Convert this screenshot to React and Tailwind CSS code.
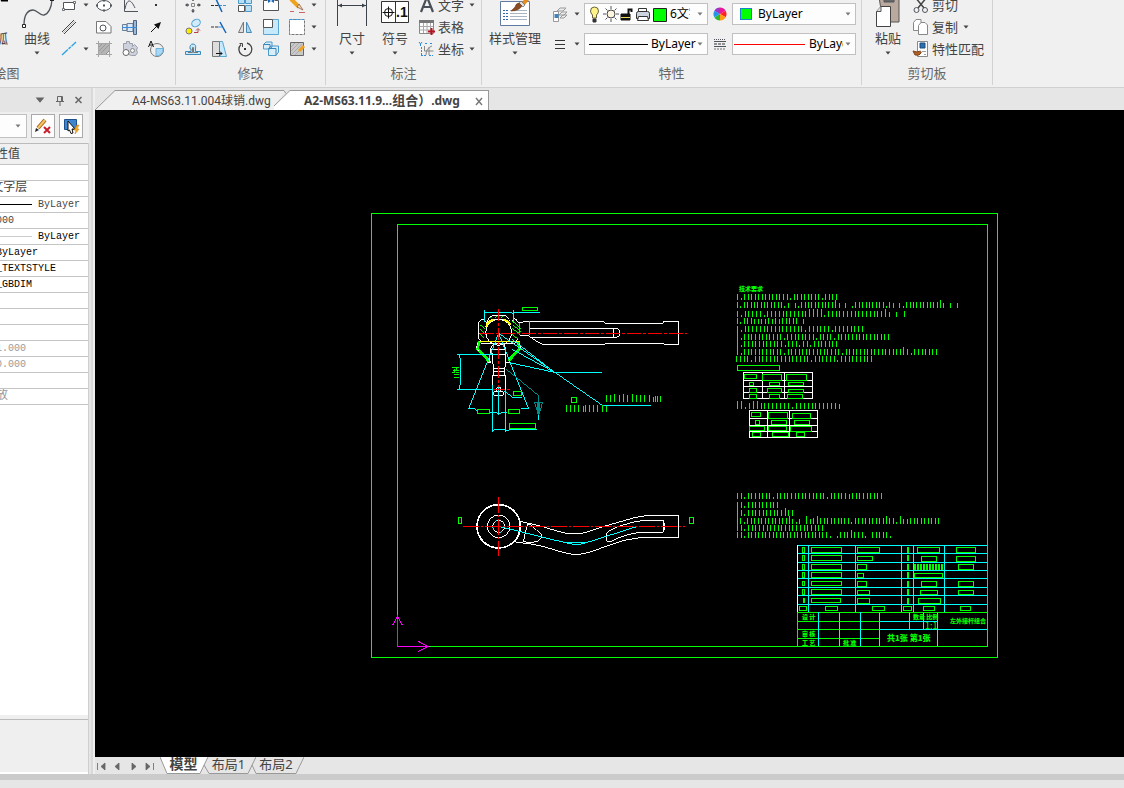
const cjk = "font-['Noto_Sans','Noto_Sans_CJK_SC',sans-serif]";

function Icon({ children, className = "h-[18px] w-[18px]", box = "0 0 18 18" }) {
  return (
    <svg className={`${className} shrink-0`} viewBox={box} fill="none" stroke="#50555c" aria-hidden="true">
      {children}
    </svg>
  );
}

function Caret({ className = "h-2 w-2" }) {
  return (
    <svg className={`shrink-0 ${className}`} viewBox="0 0 8 8" fill="#444" aria-hidden="true">
      <path d="M1.500 2.500h5L4 5.500z" />
    </svg>
  );
}

const drawTools = [
  ["矩形", true, <Icon key="i"><path d="M3.500 6.500h11v7h-11z" fill="#fff" /><path d="M13.500 5.500h2v2h-2zM2.500 12.500h2v2h-2z" fill="#fff" strokeWidth=".8" /></Icon>],
  ["椭圆", false, <Icon key="i"><ellipse cx="9" cy="9.500" rx="7" ry="5" fill="#fff" /><path d="M8 4.500h2M8 14.500h2M1 9.500h2M15 9.500h2M8 9.500h2" strokeWidth="2" /></Icon>],
  ["抛物线", false, <Icon key="i"><path d="M3.500 1v14.500H17" /><path d="M4 13C6 2 10 3 14 12" /></Icon>],
  ["点", false, <Icon key="i"><path d="M8 8h2v2H8z" fill="#333" stroke="none" /></Icon>],
  ["双线", false, <Icon key="i"><path d="M2 14 14 2M4 16 16 4" stroke="#444" /><path d="M3 15 15 3" stroke="#bbb" /></Icon>],
  ["多边形", false, <Icon key="i"><path d="M1.500 3.500H11l5 5v6.500H1.500z" fill="#fff" stroke="#777" /><circle cx="8" cy="10" r="3" /></Icon>],
  ["轴", false, <Icon key="i"><path d="M1.500 6.500H6v6H1.500zM6 5.500h6v8H6z" fill="#d5e9fa" stroke="#6b7f95" /><path d="M12.500 2.500h3v14h-3z" fill="#9fb8d6" stroke="#4d6484" /><path d="M1 9.500h15" stroke="#3b8de0" /></Icon>],
  ["箭头", false, <Icon key="i"><path d="m4 14 6-6" stroke="#111" /><path d="m14 4-2.500 7L7 6.500z" fill="#111" stroke="none" /></Icon>],
  ["构造线", true, <Icon key="i"><path d="M2 15 16 2" stroke="#2ea3e6" strokeWidth="1.400" strokeDasharray="8 1 3 1" /></Icon>],
  ["填充", false, <Icon key="i"><path d="M3.500 3.500h11v7l-4 4h-7z" fill="#b5b5b5" stroke="#8c8c8c" /><path d="M1 3.500h16M1 14.500h16M3.500 1v16M14.500 1v16" stroke="#a5a5a5" /><path d="m4 7 3-3M4 11l7-7M6 13l8-8" stroke="#999" /></Icon>],
  ["零件", false, <Icon key="i"><path d="M2.500 3.500h3V1.500h3v2h3v3l2-2 3 3-1 2.500 1 2.500-2 3h-4l-3-1-5-5z" fill="#cdd2dc" stroke="#9a9fab" /><circle cx="5" cy="12.500" r="3" fill="#fff" stroke="#666" /><circle cx="11.500" cy="10.500" r="2" fill="#f4f4f4" stroke="#888" /></Icon>],
  ["文字环绕", false, <Icon key="i"><circle cx="10" cy="10" r="6.500" stroke="#777" /><path d="M9 8.500h7a6 6 0 0 1-7 7z" fill="#a8d8f5" stroke="#6db5df" /><path d="m1.500 7 2.500-6 2.500 6M2.500 5h3" stroke="#111" /></Icon>],
];

const editTools = [
  ["移动", <Icon key="i"><path d="M9 2v3M9 13v3M2 9h3M13 9h3" strokeWidth="1.500" /><path d="m9 1-2 2.500h4zM9 17l-2-2.500h4zM1 9l2.500-2v4zM17 9l-2.500-2v4z" fill="#50555c" stroke="none" /><path d="M7.500 7.500h3v3h-3z" stroke="#888" /></Icon>],
  ["修剪", <Icon key="i"><path d="M1 9.500h8" stroke="#333" strokeDasharray="3 1" /><path d="M9 9.500h8" stroke="#3b97dc" strokeDasharray="3 1" /><path d="m6 3 6 13" stroke="#1665bb" strokeWidth="1.500" /></Icon>],
  ["阵列", <Icon key="i"><path d="M2.500 1.500h6v6h-6zM9.500 1.500h6v6h-6zM9.500 9.500h6v6h-6z" fill="#b9dff5" stroke="#4a99c9" /><path d="M2.500 9.500h6v6h-6z" fill="#fff" stroke="#555" /></Icon>],
  ["打断", <Icon key="i"><path d="M1.500 4.500h4M12.500 4.500h4M1.500 4.500v10h15v-10" fill="#fff" /><path d="M6 3v4l3-2zM12 3v4L9 5z" fill="#1665bb" stroke="none" /></Icon>],
  ["删除", <Icon key="i"><path d="m3 3 8 8" stroke="#eea321" strokeWidth="4" /><path d="m11 8 4 6-6-3z" fill="#f9d6a8" stroke="#80523a" strokeWidth=".7" /><path d="M2 15.500h4M11 16.500h6" stroke="#c66" /></Icon>],
  ["复制", <Icon key="i"><ellipse cx="12" cy="5" rx="4.500" ry="3.500" fill="#d2ebfa" stroke="#4d9fd0" transform="rotate(-30 12 5)" /><circle cx="5" cy="13" r="3" fill="#ffea00" stroke="#777" /><path d="M10 14.500h4v-3m-2 1 2-2 2 2" stroke="#b54040" /></Icon>],
  ["延伸", <Icon key="i"><path d="M1 9h7" stroke="#333" strokeDasharray="3 1" /><path d="M8 9h4" stroke="#3b97dc" /><path d="m10 4 6 11" stroke="#1665bb" strokeWidth="1.500" /></Icon>],
  ["镜像", <Icon key="i"><path d="M7.500 4v10.500h-5z" fill="#ddd" stroke="#777" /><path d="M10.500 4v10.500h5z" fill="#a9d5ef" stroke="#4a8ab5" /></Icon>],
  ["缩放", <Icon key="i"><path d="M1.500 1.500h15v15h-15z" fill="#c6e9fb" stroke="#5aa7d0" /><path d="M1.500 1.500h9v8h-9z" fill="#fff" stroke="#555" /></Icon>],
  ["选择", <Icon key="i"><path d="M1.500 1.500h15v15h-15z" fill="#fff" stroke="#777" strokeDasharray="3 1" /><path d="M1.500 16.500v-15h15" stroke="#3b97dc" strokeDasharray="2 1" /></Icon>],
  ["偏移", <Icon key="i"><path d="M1.500 14.500h15v-3h-5V9q1-5-2.500-5T6 9h1v2.500H1.500z" fill="#c6e9fb" stroke="#3d89b8" /><path d="M4 12.500h4.500V7.500q.500-1 1 0v5H14" stroke="#777" /></Icon>],
  ["拉伸", <Icon key="i"><path d="M9.500 1.500h3l4 15h-7z" fill="#c6e9fb" stroke="#5aa7d0" /><path d="M2.500 1.500h7v15h-7z" fill="#ddd" stroke="#777" /><path d="M6 13.500h6m-2-2 2 2-2 2" stroke="#111" /></Icon>],
  ["旋转", <Icon key="i"><path d="M5 4.500A6.500 6.500 0 1 0 11 3" stroke="#444" strokeWidth="1.300" /><path d="M3.500 3.500H6.500v3.500" stroke="#444" /><path d="M8 9h2" stroke="#333" strokeWidth="2" /></Icon>],
  ["三维阵列", <Icon key="i"><path d="M1.500 4.500 4 2h6v5l-2 2H1.500zM6.500 8.500 9 6h7.500v6L14 15.500H6.500z" fill="#d8effb" stroke="#4a99c9" /><path d="M1.500 4.500H8V9M6.500 8.500H14v7" stroke="#3685b5" /></Icon>],
  ["编辑填充", <Icon key="i"><path d="M2.500 2.500h13v13h-13z" fill="#c9c9c9" stroke="#666" /><path d="m3 7 4-4M3 11l8-8M3 15 14 4M7 15l4-4" stroke="#aaa" /><path d="m11 11 5-5" stroke="#f0a020" strokeWidth="3" /></Icon>],
];

function Group({ label, className, children }) {
  return (
    <section className={`flex h-[85px] shrink-0 flex-col border-r border-[#d2d2d2] ${className}`}>
      <div className="flex h-[63px] items-end overflow-hidden">{children}</div>
      <h2 className="flex h-[22px] items-center justify-center text-[13px] text-[#666]">{label}</h2>
    </section>
  );
}

function BigButton({ label, className, children }) {
  return (
    <button className={`flex shrink-0 flex-col items-center pb-1.5 ${className}`}>
      <span className="flex h-8 items-end">{children}</span>
      <span className="h-5 text-[13px] leading-[18px] whitespace-nowrap">{label}</span>
      <Caret />
    </button>
  );
}

function RowButton({ label, caret, children }) {
  return (
    <button className="flex h-[22px] items-center gap-[2px] text-[13px] leading-5 whitespace-nowrap">
      {children}
      {label}
      {caret && <Caret className="ml-0.5 h-2 w-2" />}
    </button>
  );
}

function Combo({ name, value, lead, className = "" }) {
  return (
    <div className="flex h-[22px] w-[124px] items-center border border-[#c0c0c0] bg-[#fdfdfd] pr-[3px] pl-1">
      {lead}
      <select aria-label={name} className={`appearance-none overflow-hidden bg-transparent text-xs text-black outline-none ${className}`}>
        <option>{value}</option>
      </select>
      <Caret className="ml-auto h-2 w-2 opacity-70" />
    </div>
  );
}

function Ribbon() {
  return (
    <header className="flex h-[88px] shrink-0 overflow-hidden border-b border-[#d0d0d0] bg-[#f0f0f0]">
      <div className="flex w-[176px] shrink-0 justify-end overflow-hidden">
        <Group label="绘图" className="w-[338px] [&>div]:justify-end [&>div]:pr-1.5">
          <BigButton label="圆弧" className="mr-2">
            <Icon className="h-8 w-8" box="0 0 32 32"><path d="M2 28Q6 6 26 1" /><path d="M22 3h7" stroke="#000" strokeWidth="3" /></Icon>
          </BigButton>
          <BigButton label="曲线" className="mr-[5px] w-9">
            <Icon className="h-8 w-9" box="0 0 36 32">
              <path d="M5 28C5 16 10 13 14 13s7 6 11 5 8-7 8-17" strokeWidth="1.300" />
              <path d="M3.500 27.500h3v3h-3z" fill="#fff" stroke="#222" /><path d="M31 0h4v4h-4z" fill="#222" stroke="none" />
            </Icon>
          </BigButton>
          <div className="grid grid-cols-[31px_26px_26px_26px] pb-[3px]">
            {drawTools.map(([name, caret, icon], i) => (
              <button key={name} aria-label={name} className={`flex h-[22px] items-center ${i % 4 ? "justify-center" : ""}`}>
                {icon}
                {caret && <Caret className="ml-1 h-2 w-2" />}
              </button>
            ))}
          </div>
        </Group>
      </div>

      <Group label="修改" className="w-[150px] [&>div]:pl-1">
        <div className="grid grid-cols-[26px_26px_26px_26px_34px] pb-[3px]">
          {editTools.map(([name, icon], i) => (
            <button key={name} aria-label={name} className="flex h-[22px] items-center gap-1 pl-1">
              {icon}
              {i % 5 === 4 && <Caret />}
            </button>
          ))}
        </div>
      </Group>

      <Group label="标注" className="w-[156px] [&>div]:pl-1">
        <BigButton label="尺寸" className="w-11">
          <Icon className="h-8 w-8" box="0 0 32 32">
            <path d="M1.500 0v29M30.500 0v29" stroke="#3c434b" /><path d="M2 8.500h28" stroke="#3c434b" />
            <path d="m2 8.500 4-2v4zM30 8.500l-4-2v4z" fill="#3c434b" stroke="none" />
          </Icon>
        </BigButton>
        <BigButton label="符号" className="mr-0.5 w-[42px]">
          <Icon className="h-8 w-7" box="0 0 28 32">
            <path d="M.500 4.500h27v21H.500zM14.500 4v22" fill="#fff" stroke="#333" />
            <circle cx="7.500" cy="15.500" r="4" stroke="#111" /><path d="M1.500 15.500h12M7.500 9.500v12" stroke="#111" />
            <text x="15" y="20" fill="#111" stroke="none" fontSize="14" fontWeight="700" fontFamily="Liberation Sans, sans-serif">.1</text>
          </Icon>
        </BigButton>
        <div className="pb-[3px]">
          <RowButton label="文字" caret><Icon><path d="m3 16 6-15 6 15M5.500 11h7" stroke="#4a4f57" strokeWidth="2.200" /></Icon></RowButton>
          <RowButton label="表格">
            <Icon><path d="M1.500 2.500h14v13h-14z" fill="#fff" stroke="#888" /><path d="M1 3.500h15" stroke="#777" strokeWidth="3" /><path d="M2 8.500h13M2 12h13M5.500 5v10M9 5v10M12.500 5v10" stroke="#aaa" /><path d="M13.500 10v7M10 13.500h7" stroke="#b3141f" strokeWidth="2" /></Icon>
          </RowButton>
          <RowButton label="坐标" caret>
            <Icon><path d="M3.500 7v8M3 15.500h5M11 15.500h4M7 3.500h3M12 3.500h3" stroke="#2b8be0" strokeDasharray="2 1" /><path d="M6.500 6v5h9M8 15Q8 8 14 6M11 7v8" stroke="#888" /><path d="m1 2 1.500 2L4 2M2.500 4v2" stroke="#2b8be0" /></Icon>
          </RowButton>
        </div>
      </Group>

      <Group label="特性" className="w-[380px] [&>div]:pl-[3px]">
        <BigButton label="样式管理" className="mr-1.5 w-[60px]">
          <Icon className="h-8 w-8" box="0 0 32 32">
            <path d="M1.500 4.500h29v24h-29z" fill="#fff" stroke="#5f7ba0" />
            <path d="M4 13.500h5M4 16.500h5M4 19.500h5M4 22.500h5" stroke="#3668a8" strokeDasharray="2 1" />
            <path d="M11 13.500h17M11 16.500h17M11 19.500h17M11 22.500h17" stroke="#a9b4c2" />
            <path d="M30 0 24 7" stroke="#e58d1c" strokeWidth="4" /><path d="m22 4 4 4-2 2-4-4z" fill="#ddd" stroke="#555" strokeWidth=".6" />
            <path d="M20 6q-3 0-4 4l-4 4q8 0 11-5z" fill="#8a4b20" stroke="#5d3214" strokeWidth=".5" />
          </Icon>
        </BigButton>
        <div className="flex flex-col gap-2 pb-2">
          <div className="flex items-center">
            <button aria-label="图层" className="mr-0.5 flex w-[31px] items-center gap-1">
              <Icon><path d="m6 6 3-3h6l-3 3zM8 10l3-3h5l-3 3zM9 13l3-3h4l-3 3z" fill="#eee" stroke="#999" /><path d="M2.500 6.500h5v10h-5z" fill="#fff" stroke="#999" /><path d="M3.500 9h4v4h-4z" fill="#4082bb" stroke="none" /></Icon>
              <Caret />
            </button>
            <Combo
              name="图层"
              value="6文字层"
              className="w-5"
              lead={
                <Icon className="mr-[3px] h-5 w-[78px]" box="0 0 78 20">
                  <path d="M1.500 7a4 4 0 1 1 8 0q0 2-2 4v3h-4v-3q-2-2-2-4z" fill="#fff38a" stroke="#66603f" /><path d="M4 15h3v3H4z" fill="#333" stroke="#333" />
                  <circle cx="22" cy="10" r="4" fill="#fff6df" stroke="#444" /><path d="M22 2v3M22 15v3M14 10h3M27 10h3M16.500 4.500l2 2M25.500 13.500l2 2M27.500 4.500l-2 2M18.500 13.500l-2 2" />
                  <path d="M32 10h9v6h-9z" fill="#111" stroke="#111" /><path d="M32 13.500h9" stroke="#eed957" /><path d="M39.500 10V5.500h3V8" stroke="#111" strokeWidth="2" />
                  <path d="M49.500 8V4.500h8V8" fill="#fff" stroke="#333" /><path d="M47.500 9.500q0-2 2-2h9q2 0 2 2v5h-13z" fill="#ccd4e0" stroke="#333" /><path d="M49.500 12.500h9l1 4h-11z" fill="#fff" stroke="#333" />
                  <path d="M64.500 4.500h13v13h-13z" fill="#0f0" stroke="#222" />
                </Icon>
              }
            />
            <Icon className="mx-[3px] h-[18px] w-[18px]">
              <g stroke="none">
                <path d="M9 9V2.500A6.500 6.500 0 0 1 14.600 5.700z" fill="#e9189b" /><path d="M9 9l5.600-3.300a6.500 6.500 0 0 1 0 6.600z" fill="#f22" />
                <path d="M9 9l5.600 3.300A6.500 6.500 0 0 1 9 15.500z" fill="#ff9c12" /><path d="M9 9v6.500a6.500 6.500 0 0 1-5.600-3.200z" fill="#2fb52f" />
                <path d="M9 9l-5.600 3.300a6.500 6.500 0 0 1 0-6.600z" fill="#2693e8" /><path d="M9 9 3.400 5.700A6.500 6.500 0 0 1 9 2.500z" fill="#9a35c4" />
              </g>
            </Icon>
            <Combo name="颜色" value="ByLayer" className="w-16" lead={<span className="mr-1.5 ml-[3px] h-3 w-3 shrink-0 border border-[#1780d0] bg-[#00ff00]" />} />
          </div>
          <div className="flex items-center">
            <button aria-label="线型" className="mr-0.5 flex w-[31px] items-center gap-1">
              <Icon><path d="M4 5.500h10M4 9.500h10M4 13.500h10" stroke="#333" /></Icon>
              <Caret />
            </button>
            <Combo name="线型" value="ByLayer" className="w-[45px]" lead={<span className="mr-[3px] w-[59px] shrink-0 border-t border-black" />} />
            <Icon className="mx-[3px] h-[18px] w-[18px]"><path d="M3 4.500h12" strokeDasharray="1 1" /><path d="M3 6.500h12M3 11.500h12" /><path d="M3 9h12" stroke="#333" strokeDasharray="3 1" /><path d="M3 14h12" stroke="#777" strokeDasharray="2 1" /></Icon>
            <Combo name="线宽" value="ByLayer" className="w-[34px]" lead={<span className="mr-1 -ml-[3px] w-[71px] shrink-0 border-t border-[#ff0000]" />} />
          </div>
        </div>
      </Group>

      <Group label="剪切板" className="w-[131px] [&>div]:pl-0.5">
        <BigButton label="粘贴" className="w-12">
          <Icon className="h-8 w-7" box="0 0 28 32">
            <path d="M5 0h20v25H9z" fill="#b9a99e" stroke="#555" /><path d="M10 0h10v5H10z" fill="#666" />
            <path d="M2.500 14.500 7 9.500h9.500V29.500h-14z" fill="#fff" stroke="#444" /><path d="M2.500 14.500H7v-5" fill="#ddd" />
          </Icon>
        </BigButton>
        <div className="pb-[3px]">
          <RowButton label="剪切"><Icon><path d="m3 1 9 11M15 1 6 12" stroke="#444" strokeWidth="1.500" /><circle cx="4.500" cy="14" r="2.500" /><circle cx="13" cy="14" r="2.500" /></Icon></RowButton>
          <RowButton label="复制" caret><Icon><path d="M1.500 4.500 4 1.500h5v11H1.500z" fill="#fff" stroke="#888" /><path d="M6.500 7.500 9 4.500h4l2.500 2.500v9.500h-9z" fill="#fff" stroke="#888" /></Icon></RowButton>
          <RowButton label="特性匹配"><Icon><path d="M5.500 1.500h10v15h-10z" fill="#fff" stroke="#888" /><path d="M8 3h5v5H8z" fill="#2a6fb0" stroke="#1d4d80" /><path d="M10 11.500h4M12 14.500h2" stroke="#999" /><path d="m1 11 4 1q5-2 4 1t-6 2z" fill="#b0602a" stroke="#824214" /></Icon></RowButton>
        </div>
      </Group>
    </header>
  );
}

const props = [
  { value: "" },
  { value: "6文字层", text: "text-xs text-[#444]" },
  { value: "ByLayer", line: "border-black", text: "text-[10px] text-[#444]" },
  { value: "1.000", text: "text-[10px] text-[#444]" },
  { value: "ByLayer", line: "border-[#ccc]", text: "text-[10px] text-black" },
  { value: "ByLayer", swatch: true, text: "text-[10px] text-black" },
  { value: "_TEXTSTYLE", swatch: true, text: "text-[10px] text-black" },
  { value: "_GBDIM", swatch: true, text: "text-[10px] text-black" },
  { value: "" },
  { value: "" },
  { value: "" },
  { value: "251.000", text: "text-[10px] text-[#999]" },
  { value: "210.000", text: "text-[10px] text-[#999]" },
  { value: "" },
  { value: "缩放", text: "text-xs text-[#999]" },
];

function Properties() {
  return (
    <aside className="flex w-[95px] shrink-0 bg-[#e5e5e5]">
      <div className="flex min-w-0 flex-1 flex-col">
        <div className="flex h-6 items-center justify-end gap-[3px] pr-0.5">
          <Caret className="mr-0.5 h-3.5 w-3.5 opacity-80" />
          <button aria-label="固定"><Icon className="h-4 w-4" box="0 0 16 16"><path d="M5.500 9V4.500h5V9M4 9.500h8M8 10v4" stroke="#666" /><path d="M9.500 5v4" stroke="#666" /></Icon></button>
          <button aria-label="关闭"><Icon className="h-4 w-4" box="0 0 16 16"><path d="m4.500 5 6 6M10.500 5l-6 6" stroke="#666" strokeWidth="1.500" /></Icon></button>
        </div>
        <div className="flex h-[31px] items-start justify-end gap-1 bg-[#efefef] pt-0.5 pr-1.5">
          <div className="flex h-6 min-w-0 flex-1 items-center border border-l-0 border-[#c0c0c0] bg-[#fdfdfd] pr-1">
            <select aria-label="对象" className="w-2 appearance-none bg-transparent" />
            <Caret className="ml-auto h-2 w-2 opacity-70" />
          </div>
          <button aria-label="清除选择" className="flex h-6 w-6 shrink-0 items-center justify-center border border-[#aaa] bg-[#fdfdfd]">
            <Icon><path d="m4 11 7-8" stroke="#a8641c" strokeWidth="4" /><path d="m4 11 7-8" stroke="#f5c565" strokeWidth="2" /><path d="m1 15 1-4 3 2z" fill="#222" stroke="none" /><path d="m10 10 6 6M16 10l-6 6" stroke="#c8202a" strokeWidth="2" /></Icon>
          </button>
          <button aria-label="快速选择" className="flex h-6 w-6 shrink-0 items-center justify-center border border-[#aaa] bg-[#fdfdfd]">
            <Icon><path d="M2.500 2.500h12v10h-12z" fill="#3c86cf" stroke="#1c4f8c" /><path d="m6 4 7 8H10l1 4-2 .500L7.500 13 6 14z" fill="#fff" stroke="#111" /><path d="m15 8-3 5h2l-1 4 4-5h-2l2-4z" fill="#f5a81c" stroke="#c97d10" strokeWidth=".5" /></Icon>
          </button>
        </div>
        <div className="flex flex-1 flex-col border-r border-[#cfcfcf] bg-white">
          <div className="flex flex-1 justify-end overflow-hidden border-t border-[#bbb]">
            <table className="h-0 w-[240px] shrink-0 table-fixed border-collapse">
              <colgroup><col className="w-[136px]" /><col /></colgroup>
              <thead>
                <tr className="h-5 bg-[#f0f0f0] text-xs text-[#444]">
                  <th className="border-b border-[#c4c4c4] p-0 font-normal leading-[19px]">属性</th>
                  <th className="border-b border-[#c4c4c4] p-0 text-left font-normal leading-[19px]">属性值</th>
                </tr>
              </thead>
              <tbody>
                {props.map((p, i) => (
                  <tr key={i} className="h-4">
                    <td className="border-b border-[#c4c4c4] p-0" />
                    <td className="border-b border-[#c4c4c4] p-0">
                      <div className={`flex h-[15px] items-center overflow-hidden font-['Liberation_Mono','Noto_Sans_CJK_SC',monospace] leading-[15px] ${p.text || ""}`}>
                        {p.swatch && <span className="w-3 shrink-0" />}
                        {p.line && <span className={`mr-1.5 w-12 shrink-0 border-t ${p.line}`} />}
                        {p.value}
                      </div>
                    </td>
                  </tr>
                ))}
              </tbody>
            </table>
          </div>
          <div className="h-1 bg-[#efefef]" />
          <div className="mb-0.5 h-[53px] border-t border-[#bbb] bg-[#efefef]" />
        </div>
      </div>
      <div className="ml-0.5 w-1 border-r-2 border-[#efefef] bg-[#d9d9d9]" />
    </aside>
  );
}

// Annotation text below the legibility limit is shown as ticks:
// I tall, l normal, i short, "." low mark
const TICKS = { I: [-2, 8], l: [0, 6], i: [1, 5], ".": [4, 2] };

const notes = [
  [737, 836, 294, "l.lllllllllllll.llllllll.llll"],
  [737, 957, 302, "l.llllllllllll.i i.llllllllllIi i .lllllllll.li i.llllllllllIi i i"],
  [737, 904, 311, "l.lllll.lllllllllllIIII.lllllllllllllllIi i l"],
  [737, 803, 318, "l.llliiiilililllll i"],
  [737, 862, 326, "l.llllllllllllllll.llllll.llllllll"],
  [737, 888, 334, "I.lllllllllll.llllllll.llll.lllllllllllllll"],
  [737, 836, 341, "I.lllllllllll.lll.ll.lllllll"],
  [737, 936, 349, "I.lllllllllll.lllllllllllllll.llllllllllllllllIl.lllllll"],
  [736, 871, 356, "llll.lllllllllllllll.llllll.lllllllll"],
  [737, 839, 403, "II.lIIllllllll.llllllllllli"],
  [737, 881, 493, "ll.lllllll.llllllllllllll.lllllilllllllll"],
  [737, 777, 502, "ll.lllllllll"],
  [737, 792, 510, "Il.llllllllllIll"],
  [737, 938, 518, "Il.llllllllllllIi.i IilIlllllllll.lllllllllIll.Iiilllllllll"],
  [737, 822, 525, "Il.lllllllllllllllllllll"],
  [737, 890, 532, "ll.lllllllllllllllllllllll. .lllIlll. lllll."],
];

function Notes() {
  return (
    <g fill="#0f0" stroke="none">
      {notes.map(([x1, x2, y, marks]) =>
        [...marks].map((m, i) => {
          if (!TICKS[m]) return null;
          const x = Math.round(x1 + ((x2 - x1) * i) / (marks.length - 1));
          return <rect key={`${y}-${i}`} x={x} y={y + TICKS[m][0]} width="1" height={TICKS[m][1]} />;
        })
      )}
    </g>
  );
}

function Boxes({ items }) {
  return items.map(([x, y, w, h]) => <rect key={`${x}-${y}`} x={x} y={y} width={w} height={h} stroke="#0f0" />);
}

const rodBoxes = [
  [247, 52, 46, 10], [112, 358, 37, 12], [205, 358, 34, 12], [220, 304, 25, 12], [208, 400, 79, 15], [394, 322, 15, 15],
];

const tableBoxes = [
  [37, 271, 127, 16], [58, 298, 37, 13], [112, 298, 58, 18], [184, 298, 61, 18], [73, 322, 13, 11], [133, 322, 31, 11],
  [190, 322, 46, 11], [73, 340, 22, 12], [127, 340, 43, 12], [190, 343, 46, 9], [73, 358, 22, 12], [133, 358, 31, 12],
  [187, 358, 46, 12], [79, 412, 28, 13], [130, 412, 58, 18], [202, 415, 55, 16], [91, 436, 13, 13], [139, 436, 46, 14],
  [208, 436, 46, 14], [73, 454, 46, 14], [130, 454, 55, 14], [196, 454, 64, 16], [82, 472, 25, 13], [142, 472, 49, 13],
  [214, 472, 25, 13],
];

const titleBoxes = [
  [232, 187, 7, 16], [232, 211, 7, 16], [232, 238, 7, 16], [232, 262, 7, 16], [232, 289, 7, 13], [232, 313, 7, 16], [235, 340, 3, 13],
  [259, 187, 91, 16], [259, 211, 91, 16], [259, 238, 91, 16], [259, 262, 91, 16], [259, 289, 91, 13], [259, 313, 91, 16], [259, 340, 88, 13],
  [397, 187, 67, 16], [397, 214, 46, 13], [397, 238, 28, 16], [397, 265, 19, 13], [397, 289, 28, 16], [397, 316, 37, 13], [397, 340, 37, 16],
  [547, 187, 3, 16], [547, 211, 3, 16], [547, 238, 3, 16], [547, 262, 3, 16], [547, 289, 3, 16], [547, 313, 3, 16], [547, 340, 3, 16],
  [577, 187, 67, 16], [589, 214, 46, 16], [568, 265, 85, 13], [589, 289, 46, 16], [586, 316, 52, 13], [580, 340, 67, 16],
  [694, 187, 58, 16], [694, 214, 58, 16], [700, 238, 46, 16], [700, 289, 46, 16], [700, 316, 46, 13],
  [223, 364, 22, 13], [301, 364, 37, 13], [442, 364, 37, 13], [535, 364, 25, 13], [595, 364, 34, 13], [706, 364, 31, 13],
];

// Each view is drawn on a grid three times finer than the canvas
function View({ x, y, children }) {
  return <g transform={`translate(${x} ${y}) scale(.333333)`} strokeWidth="3">{children}</g>;
}

function Canvas() {
  return (
    <svg className="block h-[647px] w-[1029px]" viewBox="95 110 1029 647" fill="none" stroke="#fff" shapeRendering="crispEdges" role="img" aria-label="图纸">
      <path d="M371.500 213.500h626v444h-626z" stroke="#0f0" />
      <path d="M397.500 224.500h590v422h-590z" stroke="#0f0" />
      <path d="M397.500 646.500v-30M392.500 625.500l5-9 5 9M397.500 646.500h30M418.500 641.500l9 5-9 5" stroke="#f0f" />

      <View x={440} y={290}>
        <path d="m120 104 16 14M118 116l18 18M118 130l14 14M216 92l26 24M218 104l24 20M216 116l24 16M214 130l20 18M150 84l10-8M166 84l8-8M182 84l8-8" stroke="#0f0" />
        <path d="M240 95v40" stroke="#0f0" />
        <path d="m118 154-6 22 36 38M234 154l6 20-34 38" stroke="#0f0" strokeWidth="9" />
        <path d="m114 160-5 14 8 12M238 158l5 16-8 10M144 206l8 10M206 206l6 8" strokeDasharray="6 4" />
        <path d="M116 148V96l8-8h8l8 10M140 98q8-20 18-22h36q10 4 20 18M214 94l8-8 8 4 4 6M148 92h8l4-4h34l10 6M116 148l8 6h22M124 162h100l8-14" />
        <circle cx="176" cy="127" r="39" />
        <path d="M138 112q4-18 22-24M190 88q14 4 22 18" stroke="#ff0" strokeWidth="6" />
        <path d="M116 154h124" stroke="#ff0" />
        <path d="M232 95l10 3 14-4h235l5 6h174v-6h46v69h-44v-3H496v3H308l-18-9-25-17h-25" />
        <path d="M268 115h262l9 7v14l-9 6H272M520 115v27" />
        <path d="m160 162-8 14v16h6v26l4 19h32l4-19h14M192 162l6 16v42M152 178h46M178 193h20M160 237v19h34v-19M160 246h34M158 290v-34h38v50M162 305h28v11h-28zM170 302v-8l6-4 6 4v8M140 218h14M150 200v18" />
        <path d="M133 60v36M220 60v36M133 70l10-3h67l10 3 8-3h71M268 94v40" stroke="#0ff" />
        <path d="M52 193h126M52 298h126M61 193l-4 6 4 6v80l-4 6 4 7" stroke="#0ff" />
        <path d="M176 130 86 356h16l10 6M176 130l91 226h-24M150 366l26 4 24-4" stroke="#0ff" />
        <path d="M176 130l311 216h145M215 147l129 100h142M216 178l128 69M213 219l131 28" stroke="#0ff" />
        <path d="M158 286v140M196 300v126M176 290v86M192 302l26 20h27M158 422l8-4h28l8 4 8-4h80M296 374v16" stroke="#0ff" />
        <path d="m198 237 97 79v58M283 337h25l-12 38zM292 337v36M300 337v36" stroke="#008b8b" />
        <path d="M120 130h622" stroke="#f00" strokeDasharray="42 6 9 6" />
        <path d="M176 56v234M160 298h53" stroke="#f00" strokeDasharray="36 6 9 6" />
        <Boxes items={rodBoxes} />
        <path d="M36 233h21M38 241h18M36 247h8M48 247h9M43 254h14M42 262h15M50 230v10M44 238v10" stroke="#0f0" />
        <path d="M500 315v20M512 315v20M525 312v24M538 315v20M550 312v24M562 315v20M577 312v24M589 315v20M601 315v20M613 315v20M628 315v20M641 320v16M647 318v18M653 318v18M662 318v18M380 345v20M392 345v20M404 345v20M416 345v20M431 348v18M437 345v20M448 345v20M460 345v20M474 345v20M487 345v20M499 348v18" stroke="#0f0" />
      </View>

      <View x={440} y={485}>
        <circle cx="176" cy="124" r="65" strokeWidth="5" />
        <circle cx="176" cy="124" r="34" />
        <circle cx="176" cy="124" r="18" strokeDasharray="18 8" />
        <circle cx="176" cy="124" r="18" stroke="#0ff" strokeDasharray="8 18" strokeDashoffset="-18" />
        <path d="M238 108l24 6q43 9 83 22q33 13 63 10q22 0 40-7q50-18 100-31q42-14 72-16h96v66H600q-50 4-100 25q-60 24-90 26q-30-2-85-20q-45-13-75-15l-28-4" />
        <path d="M262 118l-12 52q32 6 48-4l8-12q0-10-16-18l-18-18zM620 106h50v36h-66q-50 4-94 29l-10-2v-26q20-16 60-26q30-10 60-11zM674 113v22" />
        <path d="m176 124 204 50 30 6 32-8 145-46M376 174h66" stroke="#0ff" />
        <path d="M69 124h666" stroke="#f00" strokeDasharray="48 5 8 5" />
        <path d="M176 36v176" stroke="#f00" strokeDasharray="48 5 8 5" />
        <Boxes items={[[55, 97, 9, 18], [748, 97, 12, 18]]} />
      </View>

      <View x={725} y={275}>
        <path d="M55 292h208v79H55zM112 292v79M179 292v79M55 317h208M55 334h208M55 352h208" />
        <path d="M73 406h205v82H73zM127 406v82M193 406v82M73 430h205M73 451h205M73 469h205" />
        <Boxes items={tableBoxes} />
      </View>

      <View x={725} y={485}>
        <path d="M217 181h570M217 205h570M217 232h570M217 256h570M217 280h570M217 307h570M217 331h570M217 358h570" stroke="#0ff" />
        <path d="M250 181v201M391 181v201M529 181v201M565 181v201M658 181v201" stroke="#0ff" />
        <path d="M217 382h570M217 382v102M217 409h246M217 433h246M217 460h246" stroke="#0f0" />
        <path d="M217 181v201" />
        <path d="M280 382v102M343 382v102M406 382v102M463 382v102M553 382v51M595 382v51M637 382v102M463 409h174M463 433h324" stroke="#0ff" />
        <path d="M787 181v303" stroke="#0f0" />
        <path d="M568 246h87" stroke="#0f0" strokeWidth="18" strokeDasharray="6 3" />
        <Boxes items={titleBoxes} />
      </View>

      <Notes />
      <g fill="#0f0" stroke="none" fontFamily="Noto Sans CJK SC, sans-serif" fontSize="6" fontWeight="900">
        <text x="739" y="291">技术要求</text>
        <text x="802" y="619">设 计</text>
        <text x="802" y="636">审 核</text>
        <text x="802" y="645">工 艺</text>
        <text x="843" y="645">批 准</text>
        <text x="913" y="619">数量 比例</text>
        <text x="950" y="623">左外接杆组合</text>
        <text x="925" y="629" fontSize="9" fontWeight="400">1:1</text>
        <text x="887" y="641" fontSize="8">共1张 第1张</text>
      </g>
    </svg>
  );
}

function SheetTabs() {
  return (
    <nav className="flex h-[17px] shrink-0 items-stretch bg-[#e6e6e6] text-[13px] leading-[14px] text-[#444]">
      <div className="flex w-[65px]">
        {[
          ["首页", "M2.500 5v7M10 5v7L6 8.500z"],
          ["上一页", "M8 5v7L4 8.500z"],
          ["下一页", "M5 5v7l4-3.500z"],
          ["末页", "M3 5v7l4-3.500zM10.500 5v7"],
        ].map(([name, d]) => (
          <button key={name} aria-label={name} className="flex w-4 items-center">
            <svg className="h-4 w-4" viewBox="0 0 16 16" fill="#666" stroke="#666" strokeWidth=".8"><path d={d} /></svg>
          </button>
        ))}
      </div>
      <Icon className="h-[17px] w-[7px]" box="0 0 7 17"><path d="M0 0h7v16.500z" fill="#fff" stroke="none" /><path d="m0 0 7 16.500" stroke="#999" /></Icon>
      <button className="flex w-[33px] justify-center border-b border-[#999] bg-white text-sm leading-[14px] font-bold whitespace-nowrap">模型</button>
      <Icon className="h-[17px] w-[9px]" box="0 0 9 17"><path d="M0 0h8L0 16.500z" fill="#fff" stroke="none" /><path d="M8 0 0 16.500M4 8l5 8.500" stroke="#999" /></Icon>
      <button className="flex w-[39px] justify-center border-b border-[#999] whitespace-nowrap">布局1</button>
      <Icon className="h-[17px] w-[8px]" box="0 0 8 17"><path d="M8 0 0 16.500M4 8l4 8.500" stroke="#999" /></Icon>
      <button className="flex w-[40px] justify-center border-b border-[#999] whitespace-nowrap">布局2</button>
      <Icon className="h-[17px] w-[8px]" box="0 0 8 17"><path d="M8 0 0 16.500" stroke="#999" /></Icon>
    </nav>
  );
}

export default function App() {
  return (
    <div className={`flex h-screen flex-col overflow-hidden bg-[#e6e6e6] text-[#444] ${cjk}`}>
      <Ribbon />
      <div className="flex min-h-0 flex-1">
        <Properties />
        <main className="flex min-w-0 flex-1 flex-col">
          <div className="flex h-[22px] shrink-0 items-end text-xs">
            <Icon className="h-5 w-[21px]" box="0 0 21 20"><path d="M0 20 20 .500h1V20z" fill="#f0f0f0" stroke="none" /><path d="M0 20 20 .500h1" stroke="#999" /></Icon>
            <button className="h-5 w-[158px] border-t border-[#999] bg-[#f0f0f0] pl-4 text-left font-['Roboto','Noto_Sans_CJK_SC',sans-serif] leading-[18px] whitespace-nowrap">A4-MS63.11.004球销.dwg</button>
            <Icon className="h-5 w-[17px]" box="0 0 17 20"><path d="M0 0h12L0 16z" fill="#f0f0f0" stroke="none" /><path d="M0 20V16L16 .500h1V20z" fill="#fff" stroke="none" /><path d="M0 .500h10l2 3M0 16 16 .500h1" stroke="#999" /></Icon>
            <div className="flex h-5 w-[198px] items-center border-t border-r border-[#999] bg-white pl-[13px]">
              <button className="leading-[18px] font-bold whitespace-nowrap">A2-MS63.11.9...<span className="text-[13px]">组合）</span>.dwg</button>
              <button aria-label="关闭" className="ml-auto"><Icon className="h-[18px] w-[18px]"><path d="m6 6 6 7M12 6l-6 7" stroke="#777" strokeWidth="1.400" /></Icon></button>
            </div>
          </div>
          <div className="min-h-0 flex-1 overflow-hidden bg-black">
            <Canvas />
          </div>
          <SheetTabs />
        </main>
      </div>
      <footer className="h-[14px] shrink-0 border-t-[6px] border-[#cbcbcb] bg-[#e6e6e6]" />
    </div>
  );
}
